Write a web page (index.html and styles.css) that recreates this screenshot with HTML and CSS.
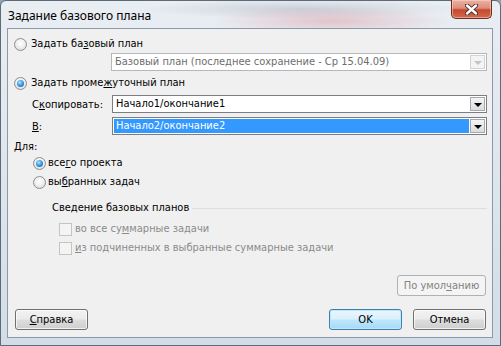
FILE: index.html
```html
<!DOCTYPE html>
<html lang="ru">
<head>
    <meta charset="UTF-8">
    <meta name="viewport" content="width=device-width, initial-scale=1.0">
    <title>Задание базового плана</title>
    <link rel="stylesheet" href="styles.css">
</head>
<body>
    <div class="window">
        <div class="titlebar">
            <span class="title">Задание базового плана</span>
            <button class="close" aria-label="Закрыть">
                <svg width="13" height="11" viewBox="0 0 13 11">
                    <path d="M2 1.5 L11 9.5 M11 1.5 L2 9.5" stroke="#3b2a2a" stroke-width="4.2" stroke-linecap="round"/>
                    <path d="M2 1.5 L11 9.5 M11 1.5 L2 9.5" stroke="#ffffff" stroke-width="2.4" stroke-linecap="round"/>
                </svg>
            </button>
        </div>

        <div class="client">
            <div class="row opt-base"><span class="radio"></span>Задать ба<u>з</u>овый план</div>
            <div class="combo disabled base-combo">
                <span class="combo-text">Базовый план (последнее сохранение - Ср 15.04.09)</span>
                <span class="arrow"><i></i></span>
            </div>

            <div class="row opt-interim"><span class="radio checked"></span>Задать проме<u>ж</u>уточный план</div>
            <div class="field copy-field">
                <span class="label">С<u>к</u>опировать:</span>
                <div class="combo">
                    <span class="combo-text">Начало1/окончание1</span>
                    <span class="arrow"><i></i></span>
                </div>
            </div>
            <div class="field to-field">
                <span class="label"><u>В</u>:</span>
                <div class="combo selected">
                    <span class="combo-text">Начало2/окончание2</span>
                    <span class="arrow"><i></i></span>
                </div>
            </div>

            <div class="row for-label">Для:</div>
            <div class="row sub first"><span class="radio checked"></span>все<u>г</u>о проекта</div>
            <div class="row sub"><span class="radio"></span>вы<u>б</u>ранных задач</div>

            <div class="group-title"><span>Сведение базовых планов</span><span class="rule"></span></div>
            <div class="row check first"><span class="checkbox"></span>во все су<u>м</u>марные задачи</div>
            <div class="row check"><span class="checkbox"></span><u>и</u>з подчиненных в выбранные суммарные задачи</div>

            <div class="default-row">
                <button class="btn disabled">По умол<u>ч</u>анию</button>
            </div>
            <div class="buttons">
                <button class="btn"><u>С</u>правка</button>
                <span class="spacer"></span>
                <button class="btn default">OK</button>
                <button class="btn">Отмена</button>
            </div>
        </div>
    </div>
</body>
</html>
```

FILE: styles.css
```css
html, body {
    margin: 0;
    padding: 0;
    width: 501px;
    height: 346px;
    overflow: hidden;
    background: #8fa3b6;
}
.window {
    box-sizing: border-box;
    width: 501px;
    height: 346px;
    border: 1px solid #5d6b78;
    border-radius: 6px 6px 0 0;
    background:
        radial-gradient(ellipse 120px 14px at 330px 20px, rgba(214, 120, 130, 0.35), transparent),
        radial-gradient(ellipse 160px 10px at 300px 8px, rgba(150, 150, 170, 0.35), transparent),
        linear-gradient(to bottom, #e9eef3 0%, #e0e7ee 40%, #d3dde8 100%);
    padding: 0 7px 0 6px;
    font-family: "DejaVu Sans Condensed", "DejaVu Sans", sans-serif;
    font-size: 11px;
    color: #000;
}
.titlebar {
    height: 27px;
    display: flex;
    align-items: flex-start;
}
.title {
    font-family: "Noto Sans", sans-serif;
    font-size: 12px;
    padding: 7px 0 0 1px;
    line-height: 16px;
}
.close {
    margin-left: auto;
    margin-right: 1px;
    margin-top: -1px;
    width: 41px;
    height: 19px;
    padding: 0;
    border: 1px solid #6b2e26;
    border-top: none;
    border-radius: 0 0 5px 5px;
    background: linear-gradient(to bottom, #eab1a4 0%, #dd8e7c 45%, #c8472c 55%, #cf6a4f 100%);
    box-shadow: inset 0 0 0 1px rgba(255, 220, 210, 0.5);
    display: flex;
    align-items: center;
    justify-content: center;
}
.client {
    box-sizing: border-box;
    height: 310px;
    background: #f0f0f0;
    border: 1px solid #8c9aa8;
}
u {
    text-decoration: underline;
    text-underline-offset: 1px;
}
.row {
    height: 16px;
    line-height: 16px;
    display: flex;
    align-items: center;
    white-space: nowrap;
}
.radio {
    box-sizing: border-box;
    width: 13px;
    height: 13px;
    border-radius: 50%;
    border: 1px solid #8e8f8f;
    background: radial-gradient(circle at 50% 40%, #ffffff 0%, #f0f0f0 45%, #d2d2d2 100%);
    margin-right: 4px;
    position: relative;
    flex: none;
}
.radio.checked::after {
    content: "";
    position: absolute;
    left: 2px;
    top: 2px;
    width: 7px;
    height: 7px;
    border-radius: 50%;
    background: radial-gradient(circle at 40% 35%, #b9e6ff 0%, #3b9fe3 45%, #0d5aa7 100%);
}
.opt-base {
    margin-top: 7px;
    padding-left: 6px;
}
.opt-interim {
    margin-top: 4px;
    padding-left: 6px;
}
.combo {
    box-sizing: border-box;
    height: 18px;
    border: 1px solid #7b7f85;
    background: #fff;
    display: flex;
    align-items: stretch;
    padding: 1px;
}
.combo-text {
    flex: 1;
    line-height: 14px;
    padding-left: 2px;
    white-space: nowrap;
    overflow: hidden;
}
.arrow {
    box-sizing: border-box;
    width: 15px;
    border: 1px solid #a5a9ae;
    background: linear-gradient(to bottom, #f4f4f4, #dcdcdc);
    display: flex;
    align-items: center;
    justify-content: center;
}
.arrow i {
    width: 0;
    height: 0;
    border-left: 4px solid transparent;
    border-right: 4px solid transparent;
    border-top: 4px solid #000;
    margin-top: 1px;
}
.base-combo {
    margin: 1px 0 0 103px;
    width: 376px;
    border-color: #b4b8bd;
}
.combo.disabled .combo-text {
    color: #6d6d6d;
}
.combo.disabled .arrow {
    border-color: #d0d3d6;
    background: #f4f4f4;
}
.combo.disabled .arrow i {
    border-top-color: #c4c4c4;
}
.field {
    display: flex;
    align-items: center;
    padding-left: 24px;
}
.field .label {
    width: 80px;
}
.field .combo {
    width: 375px;
}
.copy-field {
    margin-top: 4px;
}
.to-field {
    margin-top: 4px;
}
.combo.selected .combo-text {
    background: #3399ff;
    color: #fff;
    margin-right: 1px;
}
.for-label {
    margin-top: 4px;
    padding-left: 6px;
}
.sub {
    padding-left: 25px;
    margin-top: 3px;
}
.sub.first {
    margin-top: 0;
}
.sub .radio {
    margin-right: 2px;
}
.group-title {
    margin-top: 10px;
    height: 16px;
    line-height: 16px;
    padding-left: 44px;
    display: flex;
    align-items: center;
}
.group-title .rule {
    flex: 1;
    height: 1px;
    background: #d5dfe5;
    margin: 0 5px 0 3px;
}
.check {
    padding-left: 51px;
    margin-top: 3px;
    color: #8b8b8b;
}
.check.first {
    margin-top: 5px;
}
.checkbox {
    box-sizing: border-box;
    width: 13px;
    height: 13px;
    border: 1px solid #c4c4c4;
    background: #f4f4f4;
    margin-right: 3px;
    flex: none;
}
.default-row {
    margin-top: 19px;
    display: flex;
    justify-content: flex-end;
    padding-right: 6px;
}
.btn {
    box-sizing: border-box;
    width: 73px;
    height: 21px;
    padding: 0;
    font: inherit;
    color: #000;
    border: 1px solid #707070;
    border-radius: 3px;
    background: linear-gradient(to bottom, #f2f2f2 0%, #ebebeb 48%, #dddddd 52%, #cfcfcf 100%);
    box-shadow: inset 0 0 0 1px rgba(255, 255, 255, 0.7);
}
.btn.disabled {
    width: 89px;
    color: #838383;
    border-color: #adb2b5;
    background: #f4f4f4;
    box-shadow: none;
}
.btn.default {
    border-color: #3c7fb1;
    background: linear-gradient(to bottom, #eaf6fd 0%, #d9f0fc 48%, #bee6fd 52%, #a7d9f5 100%);
    box-shadow: inset 0 0 0 1px #bfe6f9;
}
.buttons {
    margin-top: 13px;
    display: flex;
    padding: 0 6px 0 7px;
    gap: 11px;
}
.spacer {
    flex: 1;
}
```
